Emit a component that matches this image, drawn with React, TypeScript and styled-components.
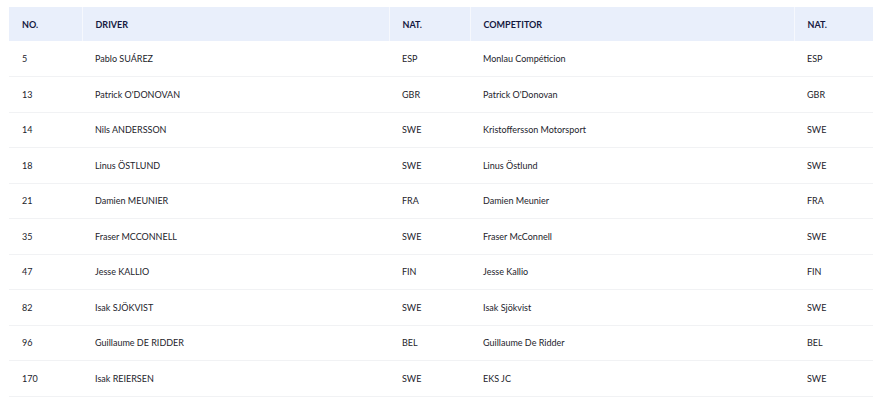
import React from "react";
import styled, { createGlobalStyle } from "styled-components";

const GlobalStyle = createGlobalStyle`
  html, body {
    margin: 0;
    padding: 0;
    background: #ffffff;
  }
  body {
    font-family: Lato, "Noto Sans", sans-serif;
  }
`;

const Wrapper = styled.div`
  padding: 7px 3px 0 9px;
`;

const Table = styled.table`
  width: 864px;
  border-collapse: collapse;
  table-layout: fixed;
  font-size: 9px;
  color: #23232b;
`;

const Col = styled.col<{ $w: number }>`
  width: ${(p) => p.$w}px;
`;

const HeadRow = styled.tr`
  background: #e9effb;
  height: 34px;
`;

const HeadCell = styled.th`
  box-sizing: border-box;
  text-align: left;
  padding: 0 0 0 13px;
  font-weight: 700;
  color: #15193f;
  border-left: 1px solid #f6f8fd;

  &:first-child {
    border-left: none;
  }
`;

const Row = styled.tr`
  height: 35.5px;
  border-bottom: 1px solid #f1f2f4;
`;

const Cell = styled.td`
  box-sizing: border-box;
  padding: 0 0 0 13px;
  white-space: nowrap;
  overflow: hidden;
`;

const columns = [
  { label: "NO.", w: 73 },
  { label: "DRIVER", w: 307 },
  { label: "NAT.", w: 81 },
  { label: "COMPETITOR", w: 324 },
  { label: "NAT.", w: 79 },
];

const entries = [
  ["5", "Pablo SUÁREZ", "ESP", "Monlau Compéticion", "ESP"],
  ["13", "Patrick O'DONOVAN", "GBR", "Patrick O'Donovan", "GBR"],
  ["14", "Nils ANDERSSON", "SWE", "Kristoffersson Motorsport", "SWE"],
  ["18", "Linus ÖSTLUND", "SWE", "Linus Östlund", "SWE"],
  ["21", "Damien MEUNIER", "FRA", "Damien Meunier", "FRA"],
  ["35", "Fraser MCCONNELL", "SWE", "Fraser McConnell", "SWE"],
  ["47", "Jesse KALLIO", "FIN", "Jesse Kallio", "FIN"],
  ["82", "Isak SJÖKVIST", "SWE", "Isak Sjökvist", "SWE"],
  ["96", "Guillaume DE RIDDER", "BEL", "Guillaume De Ridder", "BEL"],
  ["170", "Isak REIERSEN", "SWE", "EKS JC", "SWE"],
];

export default function App() {
  return (
    <>
      <GlobalStyle />
      <Wrapper>
        <Table>
          <colgroup>
            {columns.map((c, i) => (
              <Col key={i} $w={c.w} />
            ))}
          </colgroup>
          <thead>
            <HeadRow>
              {columns.map((c, i) => (
                <HeadCell key={i}>{c.label}</HeadCell>
              ))}
            </HeadRow>
          </thead>
          <tbody>
            {entries.map((row) => (
              <Row key={row[0]}>
                {row.map((v, i) => (
                  <Cell key={i}>{v}</Cell>
                ))}
              </Row>
            ))}
          </tbody>
        </Table>
      </Wrapper>
    </>
  );
}
